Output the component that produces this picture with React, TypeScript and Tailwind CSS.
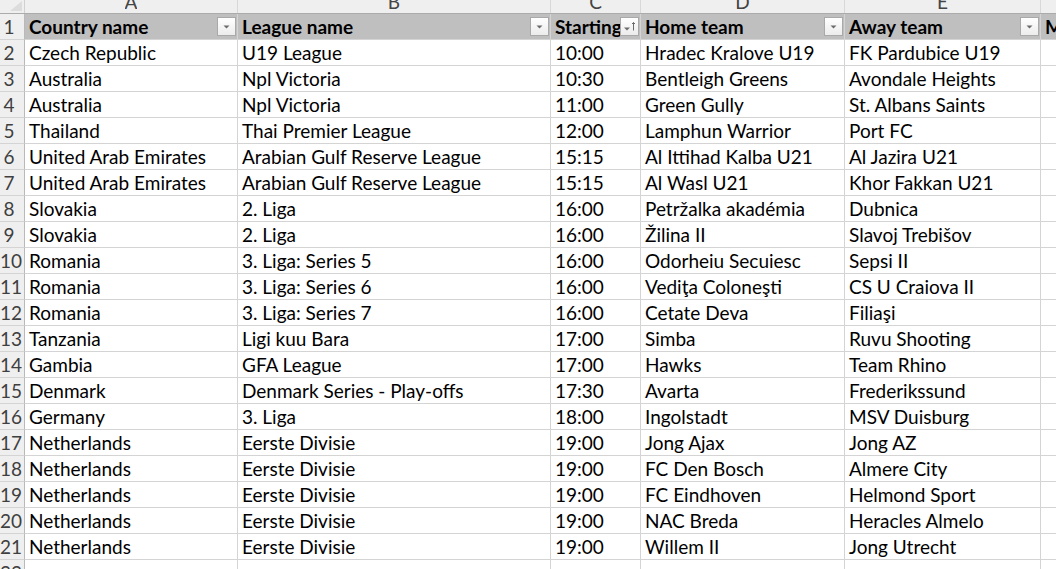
import React from 'react';

// Column widths (incl. right gridline), matching the sheet at ~130% zoom
const COLS = [
  { letter: 'A', w: 'w-[213px]' },
  { letter: 'B', w: 'w-[313px]' },
  { letter: 'C', w: 'w-[90px]' },
  { letter: 'D', w: 'w-[204px]' },
  { letter: 'E', w: 'w-[196px]' },
  { letter: 'F', w: 'w-[60px]' },
];

const HEADERS = ['Country name', 'League name', 'Starting', 'Home team', 'Away team', 'M'];

const ROWS: string[][] = [
  ['Czech Republic', 'U19 League', '10:00', 'Hradec Kralove U19', 'FK Pardubice U19'],
  ['Australia', 'Npl Victoria', '10:30', 'Bentleigh Greens', 'Avondale Heights'],
  ['Australia', 'Npl Victoria', '11:00', 'Green Gully', 'St. Albans Saints'],
  ['Thailand', 'Thai Premier League', '12:00', 'Lamphun Warrior', 'Port FC'],
  ['United Arab Emirates', 'Arabian Gulf Reserve League', '15:15', 'Al Ittihad Kalba U21', 'Al Jazira U21'],
  ['United Arab Emirates', 'Arabian Gulf Reserve League', '15:15', 'Al Wasl U21', 'Khor Fakkan U21'],
  ['Slovakia', '2. Liga', '16:00', 'Petržalka akadémia', 'Dubnica'],
  ['Slovakia', '2. Liga', '16:00', 'Žilina II', 'Slavoj Trebišov'],
  ['Romania', '3. Liga: Series 5', '16:00', 'Odorheiu Secuiesc', 'Sepsi II'],
  ['Romania', '3. Liga: Series 6', '16:00', 'Vediţa Coloneşti', 'CS U Craiova II'],
  ['Romania', '3. Liga: Series 7', '16:00', 'Cetate Deva', 'Filiaşi'],
  ['Tanzania', 'Ligi kuu Bara', '17:00', 'Simba', 'Ruvu Shooting'],
  ['Gambia', 'GFA League', '17:00', 'Hawks', 'Team Rhino'],
  ['Denmark', 'Denmark Series - Play-offs', '17:30', 'Avarta', 'Frederikssund'],
  ['Germany', '3. Liga', '18:00', 'Ingolstadt', 'MSV Duisburg'],
  ['Netherlands', 'Eerste Divisie', '19:00', 'Jong Ajax', 'Jong AZ'],
  ['Netherlands', 'Eerste Divisie', '19:00', 'FC Den Bosch', 'Almere City'],
  ['Netherlands', 'Eerste Divisie', '19:00', 'FC Eindhoven', 'Helmond Sport'],
  ['Netherlands', 'Eerste Divisie', '19:00', 'NAC Breda', 'Heracles Almelo'],
  ['Netherlands', 'Eerste Divisie', '19:00', 'Willem II', 'Jong Utrecht'],
];

function FilterButton({ sorted = false }: { sorted?: boolean }) {
  return (
    <div className="absolute right-[1px] top-[3px] w-[19px] h-[19px] border border-[#a9a9a9] bg-gradient-to-b from-white to-[#ececec] flex items-center justify-center">
      <svg width="17" height="17" viewBox="0 0 17 17">
        {sorted ? (
          <>
            <path d="M3 9.5h6l-3 3z" fill="#6b6b6b" />
            <path d="M12.5 4.5v8M11 6l1.5-1.5L14 6" stroke="#6b6b6b" strokeWidth="1" fill="none" />
          </>
        ) : (
          <path d="M5.5 7.5h6l-3 3z" fill="#6b6b6b" />
        )}
      </svg>
    </div>
  );
}

function RowNum({ n, className = '' }: { n: number; className?: string }) {
  return (
    <div
      className={`w-[25px] shrink-0 border-r border-b border-r-[#b9b9b9] border-b-[#d4d4d4] bg-[#efefef] text-[#3f3f3f] flex items-center pt-[2px] overflow-hidden ${className}`}
    >
      <span className="w-[18px] text-center">{n}</span>
    </div>
  );
}

export default function App() {
  return (
    <div
      className="w-[1056px] h-[569px] overflow-hidden bg-white text-[19px] text-black"
      style={{ fontFamily: 'Lato, "Liberation Sans", sans-serif' }}
    >
      {/* Column letters (top partly scrolled off) */}
      <div className="flex h-[14px] border-b border-[#ababab] bg-[#efefef] overflow-hidden">
        <div className="w-[25px] shrink-0 border-r border-[#d0d0d0] relative">
          <svg className="absolute right-[2px] bottom-[2px]" width="12" height="10" viewBox="0 0 12 10">
            <path d="M12 0v10H0z" fill="#dcdcdc" />
          </svg>
        </div>
        {COLS.map((c) => (
          <div
            key={c.letter}
            className={`${c.w} shrink-0 border-r border-[#d8d8d8] flex justify-center items-end text-[#444] overflow-hidden`}
          >
            <span className="block h-[13px] leading-[3px] overflow-hidden">{c.letter}</span>
          </div>
        ))}
      </div>

      {/* Table header row */}
      <div className="flex h-[26px]">
        <RowNum n={1} className="bg-[#e4e4e4]" />
        {COLS.map((c, i) => (
          <div
            key={c.letter}
            className={`${c.w} shrink-0 relative border-r border-b border-[#d4d4d4] bg-[#bfbfbf] font-bold flex items-center pl-[4px] pt-[2px] overflow-hidden whitespace-nowrap`}
          >
            {HEADERS[i]}
            <FilterButton sorted={i === 2} />
          </div>
        ))}
      </div>

      {/* Data rows */}
      {ROWS.map((r, ri) => (
        <div key={ri} className="flex h-[26px]">
          <RowNum n={ri + 2} />
          {COLS.map((c, ci) => (
            <div
              key={c.letter}
              className={`${c.w} shrink-0 border-r border-b border-[#d4d4d4] flex items-center pl-[4px] pt-[2px] overflow-hidden whitespace-nowrap`}
            >
              {r[ci] ?? ''}
            </div>
          ))}
        </div>
      ))}

      {/* Row 22, partly visible */}
      <div className="flex h-[26px]">
        <RowNum n={22} />
        {COLS.map((c) => (
          <div key={c.letter} className={`${c.w} shrink-0 border-r border-b border-[#d4d4d4]`} />
        ))}
      </div>
    </div>
  );
}
